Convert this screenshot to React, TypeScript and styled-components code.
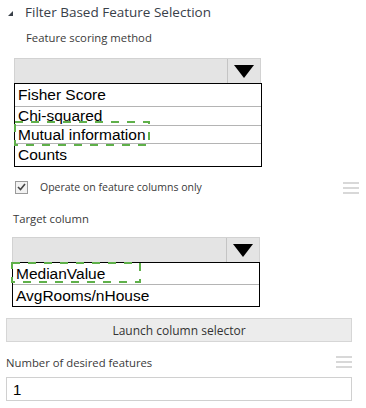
import React from "react";
import styled, { createGlobalStyle } from "styled-components";

const Global = createGlobalStyle`
  html, body { margin: 0; padding: 0; background: #fff; }
  body { font-family: "Open Sans", "Noto Sans", sans-serif; }
`;

const Panel = styled.div`
  width: 366px;
  height: 408px;
  position: relative;
  overflow: hidden;
  display: flex;
  flex-direction: column;
`;

const Header = styled.div`
  display: flex;
  align-items: center;
  height: 24px;
  padding-left: 8px;
  color: #394049;
  font-size: 13.5px;
`;

const Caret = styled.span`
  width: 0;
  height: 0;
  border-left: 5px solid transparent;
  border-bottom: 5px solid #394049;
  margin-right: 12px;
  margin-top: 2px;
`;

const Label = styled.div<{ $left: number; $top: number }>`
  margin-left: ${(p) => p.$left}px;
  margin-top: ${(p) => p.$top}px;
  font-size: 11.3px;
  color: #3a3a3a;
  line-height: 16px;
`;

const Select = styled.div<{ $left: number; $top: number; $width: number }>`
  margin-left: ${(p) => p.$left}px;
  margin-top: ${(p) => p.$top}px;
  width: ${(p) => p.$width}px;
  height: 25px;
  box-sizing: border-box;
  background: #e4e4e4;
  border: 1px solid #d2d2d2;
  border-bottom: none;
  display: flex;
  justify-content: flex-end;
`;

const ArrowBox = styled.div`
  width: 32px;
  border-left: 1px solid #c4c4c4;
  display: flex;
  align-items: center;
  justify-content: center;
`;

const Arrow = styled.span`
  width: 0;
  height: 0;
  border-left: 10px solid transparent;
  border-right: 10px solid transparent;
  border-top: 13px solid #000;
  margin-top: 1px;
`;

const List = styled.div<{ $left: number; $width: number }>`
  margin-left: ${(p) => p.$left}px;
  width: ${(p) => p.$width}px;
  box-sizing: border-box;
  border: 1px solid #000;
  display: flex;
  flex-direction: column;
`;

const Row = styled.div<{ $h: number }>`
  height: ${(p) => p.$h}px;
  box-sizing: border-box;
  padding-left: 3px;
  font-family: "Liberation Sans", Arial, sans-serif;
  font-size: 15.5px;
  color: #000;
  display: flex;
  align-items: center;
  border-bottom: 1px solid #b4b4b4;
  &:last-child { border-bottom: none; }
`;

const CheckRow = styled.div`
  display: flex;
  align-items: center;
  margin-top: 13px;
  margin-left: 15px;
  height: 14px;
  font-size: 10.5px;
  color: #3a3a3a;
`;

const Check = styled.span`
  width: 13px;
  height: 13px;
  box-sizing: border-box;
  border: 1px solid #9a9a9a;
  background: #f2f2f2;
  display: flex;
  align-items: center;
  justify-content: center;
  margin-right: 12px;
`;

const Menu = styled.span<{ $top: number; $left: number }>`
  position: absolute;
  top: ${(p) => p.$top}px;
  left: ${(p) => p.$left}px;
  width: 16px;
  display: flex;
  flex-direction: column;
  gap: 3px;
  & > i { display: block; height: 2px; background: #d8d8d8; }
`;

const LaunchButton = styled.div`
  margin-left: 6px;
  margin-top: 11px;
  width: 346px;
  height: 24px;
  box-sizing: border-box;
  background: #ececec;
  border: 1px solid #d6d6d6;
  display: flex;
  align-items: center;
  justify-content: center;
  font-size: 12px;
  color: #333;
`;

const Input = styled.div`
  margin-left: 6px;
  margin-top: 6px;
  width: 346px;
  height: 24px;
  box-sizing: border-box;
  border: 1px solid #d0d0d0;
  display: flex;
  align-items: center;
  padding-left: 6px;
  font-family: "Liberation Sans", Arial, sans-serif;
  font-size: 15px;
  color: #000;
`;

const Dashed = styled.div<{ $x: number; $y: number; $w: number; $h: number }>`
  position: absolute;
  left: ${(p) => p.$x}px;
  top: ${(p) => p.$y}px;
  width: ${(p) => p.$w}px;
  height: ${(p) => p.$h}px;
  pointer-events: none;
`;

const DashSvg = ({ w, h }: { w: number; h: number }) => (
  <svg width={w} height={h} style={{ display: "block" }}>
    <rect
      x={1}
      y={1}
      width={w - 2}
      height={h - 2}
      fill="none"
      stroke="#5fb04a"
      strokeWidth={2}
      strokeDasharray="8 8"
    />
  </svg>
);

export default function App() {
  return (
    <>
      <Global />
      <Panel>
        <Header>
          <Caret />
          Filter Based Feature Selection
        </Header>
        <Label $left={26} $top={6}>Feature scoring method</Label>
        <Select $left={14} $top={12} $width={247}>
          <ArrowBox>
            <Arrow />
          </ArrowBox>
        </Select>
        <List $left={14} $width={248}>
          <Row $h={23}>Fisher Score</Row>
          <Row $h={19}>Chi-squared</Row>
          <Row $h={18}>Mutual information</Row>
          <Row $h={22}>Counts</Row>
        </List>
        <CheckRow>
          <Check>
            <svg width="9" height="8" viewBox="0 0 9 8">
              <path d="M1 4 L3.5 6.5 L8 1" fill="none" stroke="#444" strokeWidth="1.6" />
            </svg>
          </Check>
          Operate on feature columns only
        </CheckRow>
        <Label $left={13} $top={17}>Target column</Label>
        <Select $left={12} $top={10} $width={248}>
          <ArrowBox>
            <Arrow />
          </ArrowBox>
        </Select>
        <List $left={12} $width={248}>
          <Row $h={22}>MedianValue</Row>
          <Row $h={21}>AvgRooms/nHouse</Row>
        </List>
        <LaunchButton>Launch column selector</LaunchButton>
        <Label $left={6} $top={13}>Number of desired features</Label>
        <Input>1</Input>

        <Menu $top={182} $left={343}>
          <i />
          <i />
          <i />
        </Menu>
        <Menu $top={356} $left={336}>
          <i />
          <i />
          <i />
        </Menu>

        <Dashed $x={14} $y={121} $w={136} $h={25}>
          <DashSvg w={136} h={25} />
        </Dashed>
        <Dashed $x={11} $y={262} $w={130} $h={21}>
          <DashSvg w={130} h={21} />
        </Dashed>
      </Panel>
    </>
  );
}
